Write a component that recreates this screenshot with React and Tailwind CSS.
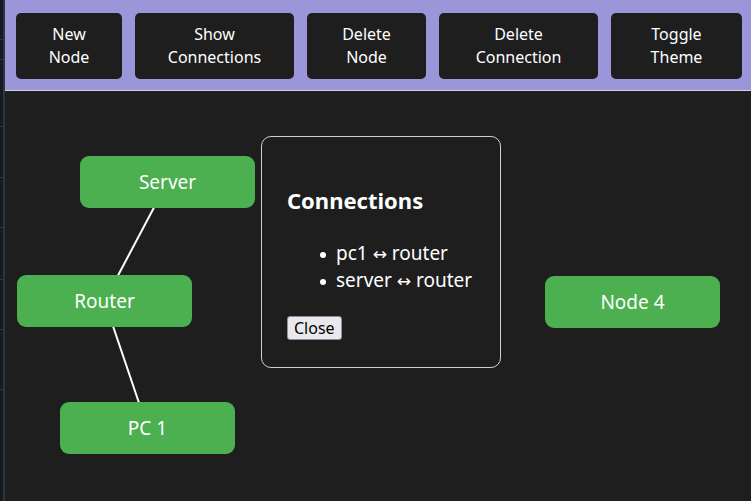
import React from "react";

const buttons = [
  { label: ["New", "Node"], w: "w-[106px]" },
  { label: ["Show", "Connections"], w: "w-[159px]" },
  { label: ["Delete", "Node"], w: "w-[119px]" },
  { label: ["Delete", "Connection"], w: "w-[159px]" },
  { label: ["Toggle", "Theme"], w: "w-[131px]" },
];

function Node({ label, className }) {
  return (
    <div
      className={`absolute w-[175px] h-[52px] rounded-[9px] bg-[#4caf50] text-white text-[19px] flex items-center justify-center ${className}`}
    >
      {label}
    </div>
  );
}

const conns = [
  ["pc1", "router"],
  ["server", "router"],
];

export default function App() {
  return (
    <div
      className="w-[751px] h-[501px] flex bg-[#1e1e1e] overflow-hidden"
      style={{ fontFamily: '"Noto Sans", sans-serif' }}
    >
      <div className="w-[3px] h-full bg-[#151b22] flex flex-col">
        <div className="h-[40px] border-b border-[#2f3742]" />
        <div className="h-[20px] border-b border-[#2f3742]" />
        <div className="h-[67px] border-b border-[#2f3742]" />
        <div className="h-[51px] border-b border-[#2f3742]" />
        <div className="h-[50px] border-b border-[#2f3742]" />
        <div className="h-[52px] border-b border-[#2f3742]" />
        <div className="h-[50px] border-b border-[#2f3742]" />
        <div className="h-[60px] border-b border-[#2f3742]" />
      </div>
      <div className="w-[2px] h-full bg-[#2c343e]" />
      <div className="flex-1 flex flex-col">
        <div className="h-[91px] bg-[#9b95da] border-b border-[#d4d4d4] flex items-start pl-[11px] pt-[13px] gap-[13px]">
          {buttons.map((b, i) => (
            <button
              key={i}
              className={`${b.w} h-[66px] shrink-0 rounded-[5px] bg-[#1e1e1e] text-white text-[16px] leading-[23px] flex flex-col items-center justify-center`}
            >
              <span>{b.label[0]}</span>
              <span>{b.label[1]}</span>
            </button>
          ))}
        </div>
        <div className="relative flex-1 bg-[#1e1e1e]">
          <svg className="absolute inset-0 w-full h-full">
            <line x1="162.5" y1="91" x2="99.5" y2="210" stroke="white" strokeWidth="2" />
            <line x1="99.5" y1="210" x2="142.5" y2="337" stroke="white" strokeWidth="2" />
          </svg>
          <Node label="Server" className="left-[75px] top-[65px]" />
          <Node label="Router" className="left-[12px] top-[184px]" />
          <Node label="PC 1" className="left-[55px] top-[311px]" />
          <Node label="Node 4" className="left-[540px] top-[185px]" />

          <div className="absolute left-[256px] top-[45px] w-[240px] h-[232px] rounded-[10px] border border-[#cfcfcf] bg-[#1e1e1e] text-white pl-[25px]">
            <h2 className="mt-[48px] text-[22px] leading-[30px] font-bold">Connections</h2>
            <ul className="mt-[25px]">
              {conns.map(([a, b]) => (
                <li key={a} className="flex items-center h-[27px] text-[19px]">
                  <span className="ml-[33px] w-[6px] h-[6px] rounded-full bg-white mt-[2px]" />
                  <span className="ml-[10px] whitespace-pre">
                    {a}{" "}
                    <span style={{ fontFamily: '"DejaVu Sans", sans-serif' }} className="text-[17px]">↔</span>
                    {" "}{b}
                  </span>
                </li>
              ))}
            </ul>
            <button className="mt-[22px] h-[24px] px-[6px] rounded-[3px] border border-[#8f8f9d] bg-[#e9e9ed] text-black text-[16px] leading-[20px] flex items-center">
              Close
            </button>
          </div>
        </div>
      </div>
    </div>
  );
}
